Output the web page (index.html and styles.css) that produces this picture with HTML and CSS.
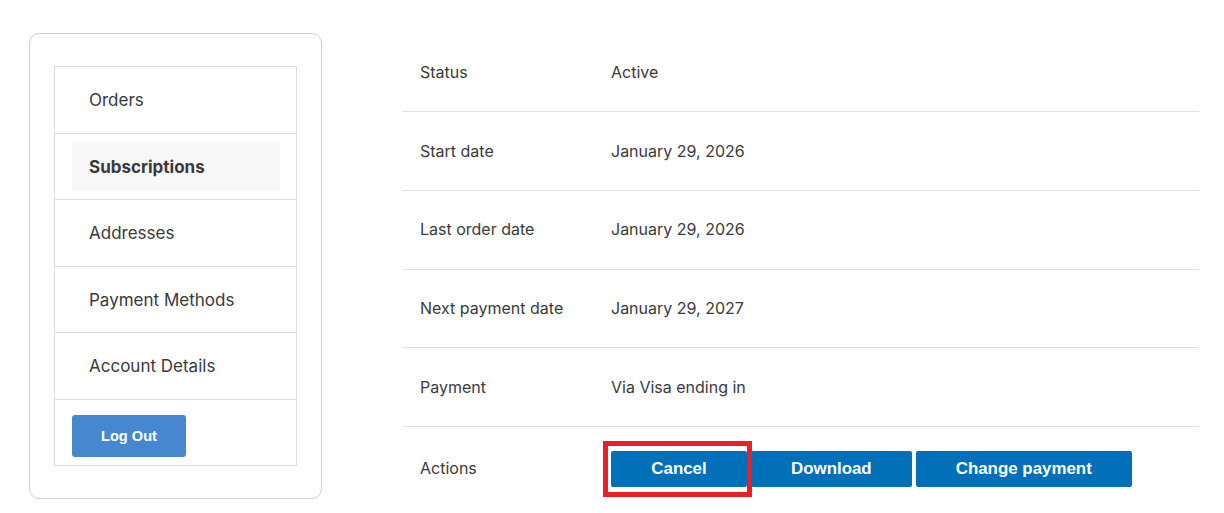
FILE: index.html
```html
<!DOCTYPE html>
<html lang="en">
<head>
<meta charset="utf-8">
<title>Subscription</title>
<link rel="stylesheet" href="styles.css">
</head>
<body>
<div class="page">
  <aside class="sidebar">
    <ul class="nav">
      <li class="nav-item"><a class="nav-link" href="#">Orders</a></li>
      <li class="nav-item"><a class="nav-link is-active" href="#">Subscriptions</a></li>
      <li class="nav-item"><a class="nav-link" href="#">Addresses</a></li>
      <li class="nav-item"><a class="nav-link" href="#">Payment Methods</a></li>
      <li class="nav-item"><a class="nav-link" href="#">Account Details</a></li>
      <li class="nav-item nav-logout"><a class="logout-btn" href="#">Log Out</a></li>
    </ul>
  </aside>
  <main class="content">
    <table class="details">
      <tbody>
        <tr><td class="label">Status</td><td class="value">Active</td></tr>
        <tr><td class="label">Start date</td><td class="value">January 29, 2026</td></tr>
        <tr><td class="label">Last order date</td><td class="value">January 29, 2026</td></tr>
        <tr><td class="label">Next payment date</td><td class="value">January 29, 2027</td></tr>
        <tr><td class="label">Payment</td><td class="value">Via Visa ending in</td></tr>
        <tr class="actions-row">
          <td class="label">Actions</td>
          <td class="value">
            <div class="actions"><span class="highlight-wrap"><a class="btn" href="#">Cancel</a><span class="highlight"></span></span><a class="btn" href="#">Download</a><a class="btn" href="#">Change payment</a></div>
          </td>
        </tr>
      </tbody>
    </table>
  </main>
</div>
</body>
</html>
```
FILE: styles.css
```css
html, body {
  margin: 0;
  padding: 0;
  background: #ffffff;
}

body {
  font-family: Inter, "Noto Sans", "Liberation Sans", sans-serif;
  color: #3a3a3a;
}

.page {
  display: flex;
  align-items: flex-start;
  gap: 80px;
  padding: 33px 0 0 29px;
}

.sidebar {
  width: 243px;
  padding: 32px 24px;
  border: 1px solid #cfcfcf;
  border-radius: 10px;
  flex: none;
}

.nav {
  list-style: none;
  margin: 0;
  padding: 0;
  border: 1px solid #dddddd;
}

.nav-item {
  padding: 8px 16px 8px 17px;
  border-bottom: 1px solid #dddddd;
}

.nav-item:last-child {
  border-bottom: none;
}

.nav-link {
  display: block;
  padding: 15px 17px 13px;
  font-size: 17px;
  line-height: 21.5px;
  color: #3a3a3a;
  text-decoration: none;
}

.nav-link.is-active {
  background: #f8f8f8;
  font-weight: 700;
}

.nav-logout {
  padding-top: 15px;
  padding-bottom: 8px;
}

.logout-btn {
  display: inline-block;
  width: 114px;
  height: 42px;
  line-height: 43px;
  text-align: center;
  background: #4688cf;
  color: #ffffff;
  border-radius: 3px;
  font-family: "Liberation Sans", Arial, sans-serif;
  font-weight: 700;
  font-size: 14.6px;
  text-decoration: none;
}

.content {
  width: 797px;
  margin-top: 0.25px;
}

.details {
  width: 100%;
  border-collapse: collapse;
}

.details td {
  padding: 27.5px 18px 26.5px;
  font-size: 16px;
  line-height: 23.75px;
  border-bottom: 1px solid #e2e2e2;
  vertical-align: middle;
}

.details td.label {
  width: 155px;
}

.details .actions-row td {
  border-bottom: none;
  padding-top: 24px;
  padding-bottom: 24px;
}

.actions {
  display: flex;
  gap: 4px;
}

.btn {
  display: inline-block;
  height: 36px;
  line-height: 36px;
  padding: 0 40px;
  background: #0170b9;
  color: #ffffff;
  border-radius: 2px;
  font-family: "Liberation Sans", Arial, sans-serif;
  font-weight: 700;
  font-size: 16.9px;
  text-decoration: none;
}

.highlight-wrap {
  position: relative;
  display: inline-block;
}

.highlight-wrap .btn {
  width: 56px;
  text-align: center;
}

.highlight {
  position: absolute;
  left: -8px;
  top: -10px;
  right: -5px;
  bottom: -10px;
  border: 5px solid #e8202a;
  pointer-events: none;
}
```
